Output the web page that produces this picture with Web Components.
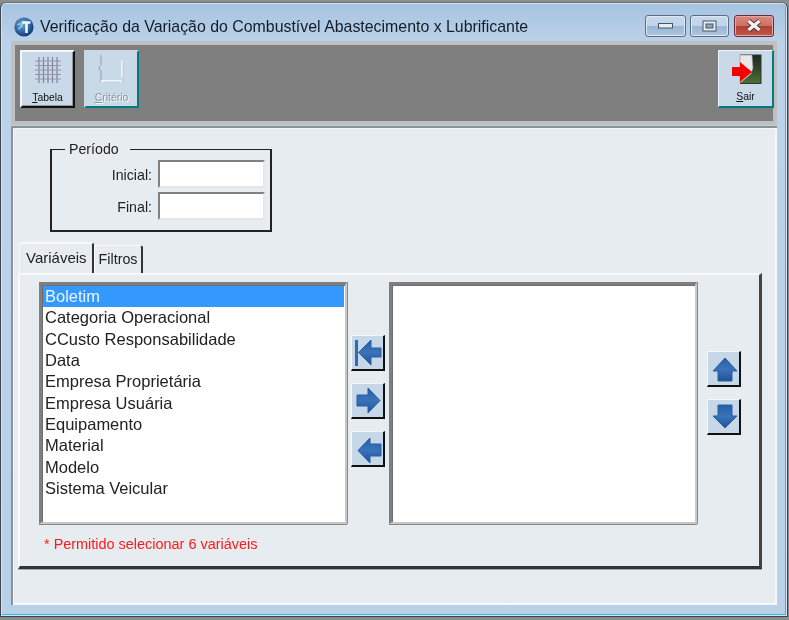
<!DOCTYPE html>
<html lang="pt"><head><meta charset="utf-8"><title>Verificação</title>
<style>
html,body{margin:0;padding:0;background:#8c8c8c;}
body{width:789px;height:620px;overflow:hidden;font-family:"Liberation Sans",Arial,sans-serif;color:#111;}
</style></head><body>
<app-window>
  <span slot="title">Verificação da Variação do Combustível Abastecimento x Lubrificante</span>
  <tool-button slot="tools" icon="grid" key="T" rest="abela" raised></tool-button>
  <tool-button slot="tools" icon="crit" key="C" rest="ritério" disabled></tool-button>
  <tool-button slot="tools-end" icon="exit" key="S" rest="air"></tool-button>

  <period-box></period-box>

  <tab-view>
    <tab-item slot="tabs" active>Variáveis</tab-item>
    <tab-item slot="tabs">Filtros</tab-item>
    <list-box>
      <list-row selected>Boletim</list-row>
      <list-row>Categoria Operacional</list-row>
      <list-row>CCusto Responsabilidade</list-row>
      <list-row>Data</list-row>
      <list-row>Empresa Proprietária</list-row>
      <list-row>Empresa Usuária</list-row>
      <list-row>Equipamento</list-row>
      <list-row>Material</list-row>
      <list-row>Modelo</list-row>
      <list-row>Sistema Veicular</list-row>
    </list-box>
    <arrow-stack class="mid">
      <arrow-button kind="first"></arrow-button>
      <arrow-button kind="right"></arrow-button>
      <arrow-button kind="left"></arrow-button>
    </arrow-stack>
    <list-box></list-box>
    <arrow-stack class="side">
      <arrow-button kind="up"></arrow-button>
      <arrow-button kind="down"></arrow-button>
    </arrow-stack>
    <span slot="note">* Permitido selecionar 6 variáveis</span>
  </tab-view>
</app-window>
<script>
function def(name, css, html){
  customElements.define(name, class extends HTMLElement{
    connectedCallback(){
      if(this.shadowRoot) return;
      const r=this.attachShadow({mode:'open'});
      r.innerHTML='<style>'+css+'</style>'+(typeof html==='function'?html(this):html);
    }
  });
}
def('app-window',`
:host{display:flex;flex-direction:column;box-sizing:border-box;width:788px;height:615px;margin-top:2px;
 border:1px solid #3d464f;border-top-color:#6a7077;border-radius:6px 6px 0 0;
 background:linear-gradient(#a5c3e0 0,#bcd2ea 40px,#b9d0e9 100%);
 box-shadow:inset 0 0 0 1px #d5e3f1, inset -2px -2px 0 #28c0e0;filter:blur(.35px)}
.title{display:flex;align-items:center;height:38px;box-sizing:border-box;padding:10px 0 0 13px;flex:none}
.logo{width:20px;height:20px;margin-right:6px;flex:none}
.t{flex:1;font:15.9px "Liberation Sans",Arial,sans-serif;color:#141c28;white-space:nowrap}
.wb{display:flex;gap:4px;padding-bottom:3px;margin-right:13px}
.wb i{display:flex;align-items:center;justify-content:center;width:40px;height:22px;box-sizing:border-box;border:1px solid #5b6d85;border-radius:3px;
 background:linear-gradient(#c6d8ec 0,#c0d4ea 48%,#9ab6d4 52%,#adc6e0 100%);box-shadow:inset 0 0 0 1px #dde8f3}
.wb i.x{border-color:#6d2a38;background:linear-gradient(#d98a80 0,#cf6f63 48%,#b03f33 52%,#c2574c 100%);box-shadow:inset 0 0 0 1px #e5a9a2}
.bar{flex:none;display:flex;justify-content:space-between;height:84px;margin:0 10px;box-sizing:border-box;border:4px solid #c0c0c0;background:#7f7f7f;padding:5px 0 0 5px}
.bar div{display:flex;gap:9px;align-items:flex-start}
.bar div.e{margin-right:-1px}
.main{flex:1;margin:1px 10px 0 10px;box-sizing:border-box;background:#e7ecf0;border:solid;border-width:2px 0 0 2px;border-color:#8d9297;box-shadow:inset 1px 1px 0 #f6f8f9, inset -2px -2px 0 #f6f8f9;padding:13px 14px 0 5px;min-height:0}
.foot{height:11px;flex:none}
`,`<div class="title">
<svg class="logo" viewBox="0 0 20 20"><defs><radialGradient id="g" cx=".4" cy=".35" r=".7"><stop offset="0" stop-color="#6fa6d8"/><stop offset=".6" stop-color="#2c63a3"/><stop offset="1" stop-color="#0f2f63"/></radialGradient></defs><circle cx="10" cy="10" r="9.6" fill="url(#g)"/><path d="M8 5.5h8.5M12.5 5.5V16" stroke="#f2f6fb" stroke-width="2.6" fill="none"/><path d="M3.5 8c2.5-2 4.5-1 4.5 .6s-3.5 2-3.5 3.8" stroke="#a8c8e6" stroke-width="1.4" fill="none"/></svg>
<div class="t"><slot name="title"></slot></div>
<div class="wb"><i style="width:41px"><svg width="15" height="7"><rect x=".5" y="1.5" width="14" height="4.5" fill="#e8edf3" stroke="#4b5563"/></svg></i><i style="width:39px;margin-right:1px"><svg width="15" height="12"><rect x="1" y="1" width="13" height="10" fill="#e8edf3" stroke="#4b5563"/><rect x="4" y="4" width="7" height="4" fill="#8aa5c4" stroke="#4b5563"/></svg></i><i class="x"><svg width="16" height="13" viewBox="0 0 16 13"><path d="M2.5 2 13.5 11M13.5 2 2.5 11" stroke="#4d3038" stroke-width="5"/><path d="M2.5 2 13.5 11M13.5 2 2.5 11" stroke="#f2f2f2" stroke-width="3.4"/></svg></i></div>
</div>
<div class="bar"><div><slot name="tools"></slot></div><div class="e"><slot name="tools-end"></slot></div></div>
<div class="main"><slot></slot></div>
<div class="foot"></div>`);

const ICONS={
grid:`<svg width="26" height="26" viewBox="0 0 26 26"><g stroke="#84819c" stroke-width="1.2" fill="none"><path d="M4 0v26M8.5 0v26M13 0v26M17.5 0v26M22 0v26"/><path d="M0 4h26M0 8.5h26M0 13h26M0 17.5h26M0 22h26" stroke="#9693ab"/></g></svg>`,
crit:`<svg width="28" height="29" viewBox="0 0 28 29"><path d="M3 0v10M2 11l-1 4M3 15v12" stroke="#9aa7b3" stroke-width="1.2" fill="none"/><path d="M3 26h20M24 6v17M23 25v3" stroke="#fff" stroke-width="1.4" fill="none"/><path d="M25 7v20H6" stroke="#aebdca" stroke-width=".6" fill="none"/></svg>`,
exit:`<svg width="32" height="30" viewBox="0 0 32 30"><defs><linearGradient id="d" x1="0" y1="0" x2="0" y2="1"><stop offset="0" stop-color="#1e2a1a"/><stop offset=".5" stop-color="#33482a"/><stop offset="1" stop-color="#4f7034"/></linearGradient></defs><rect x="10.5" y="1" width="20.5" height="28.5" fill="url(#d)" stroke="#333"/><path d="M10 1h12l1 13-2 6-11 9z" fill="#e8e8e8" stroke="#8a8a8a" stroke-width=".6"/><path d="M2 13h8V8l12 10-12 10v-6H2z" fill="#f40000"/></svg>`};
def('tool-button',`
:host{display:block;width:55px;height:58px;box-sizing:border-box;background:#c9d9e8;border:2px solid;border-color:#c9d9e8 #067a7a #067a7a #c9d9e8;font:10.4px "Liberation Sans",Arial,sans-serif;color:#111;text-align:center}
:host([raised]){border-color:#f4f7fa #111 #111 #f4f7fa;box-shadow:inset -1px -1px 0 #8d98a3}
:host([icon=exit]){width:56px;border-color:#eef3f7 #067a7a #067a7a #eef3f7;border-width:1px 2px 2px 1px}
.i{display:flex;justify-content:center;align-items:center;height:40px;box-sizing:border-box;padding-bottom:5px}
.l{line-height:12px}
u{text-underline-offset:1px}
:host([disabled]) .l{color:#8a97a3;text-shadow:1px 1px 0 #f4f7fa}
`,h=>`<div class="i">${ICONS[h.getAttribute('icon')]}</div><div class="l"><u>${h.getAttribute('key')}</u>${h.getAttribute('rest')}</div>`);

def('period-box',`
:host{display:block;width:222px;margin:0 0 10px 32px;font:14.2px "Liberation Sans",Arial,sans-serif;color:#222}
fieldset{margin:0;padding:2px 5px 9px 0;border:solid #222;border-width:1.5px 2px 2px 2px;height:77px;min-width:0}
legend{margin-left:13px;padding:0 11px 0 4px;line-height:16px;height:16px}
.r{display:flex;align-items:center;justify-content:flex-end;gap:6px;height:28px;margin-bottom:4px}
.r:first-of-type{margin-top:1px}
label{padding-top:2px}
input{all:unset;display:block;box-sizing:border-box;width:107px;height:28px;background:#fff;border:2px solid;border-color:#808080 #e6e6e6 #e6e6e6 #808080}
`,`<fieldset><legend>Período</legend>
<div class="r"><label>Inicial:</label><input aria-label="Inicial"></div>
<div class="r"><label>Final:</label><input aria-label="Final"></div></fieldset>`);

def('tab-view',`
:host{display:block;font:14.3px "Liberation Sans",Arial,sans-serif;color:#222}
.tabs{display:flex;height:31px;align-items:flex-end;padding-left:1px}
.panel{box-sizing:border-box;width:744px;height:296px;border:solid;border-width:2px 3px 3px 2px;border-color:#f7f9fa #444 #333 #f7f9fa;padding:7px 0 0 19px;display:flex;flex-direction:column;box-shadow:0 1px 0 #aaa}
.row{display:flex;align-items:flex-start;height:243px}
.note{font-size:14.45px;color:#ff1a1a;margin:11px 0 0 5px;line-height:17px}
`,`<div class="tabs"><slot name="tabs"></slot></div>
<div class="panel"><div class="row"><slot></slot></div><div class="note"><slot name="note"></slot></div></div>`);

def('tab-item',`
:host{display:block;box-sizing:border-box;height:28px;padding:5px 3px 0 4px;background:#e7ecf0;border:solid;border-width:1px 2px 0 1px;border-color:#f7f9fa #333 #333 #f7f9fa;line-height:17px;border-radius:3px 3px 0 0;white-space:nowrap}
:host([active]){font-size:15px;height:31px;padding:5px 5px 0 6px;border-width:2px 2px 0 1px}
`,`<slot></slot>`);

def('list-box',`
:host{display:block;box-sizing:border-box;width:308px;height:242px;flex:none;background:#fff;border:solid;border-width:3px 2px 2px 3px;border-color:#7f7f7f #c8c8c8 #c8c8c8 #7f7f7f;box-shadow:inset 1px 1px 0 #6e6e6e,0 1px 0 #888,1px 0 0 #888;padding:1px}
`,`<slot></slot>`);

def('list-row',`
:host{display:block;height:21.33px;padding-left:2px;font:16.5px/21.33px "Liberation Sans",Arial,sans-serif;color:#222;white-space:nowrap}
:host([selected]){background:#3399ff;color:#eaf4ff}
`,`<slot></slot>`);

def('arrow-stack',`
:host{display:flex;flex-direction:column;flex:none;width:34px;gap:12px;margin:53px 4px 0 4px}
:host(.side){margin:69px 0 0 10px}
`,`<slot></slot>`);

const ARW={
first:'<path d="M4 5h3v26H4z" fill="#2f6bb2"/><path d="M7.5 17.5 20 5v8h10v9H20v8z" fill="url(#a)" stroke="#2a5fa5"/>',
right:'<path d="M6 12h11V5l12 12.5L17 30v-7H6z" fill="url(#a)" stroke="#2a5fa5"/>',
left:'<path d="M30 13H19V7L7 19.5 19 32v-7h11z" fill="url(#a)" stroke="#2a5fa5"/>',
up:'<path d="M11 30V20H6L18 7l12 13h-5v10z" fill="url(#a)" stroke="#2a5fa5"/>',
down:'<path d="M11 6v11H6l12 12 12-12h-5V6z" fill="url(#a)" stroke="#2a5fa5"/>'};
def('arrow-button',`
:host{display:block;box-sizing:border-box;width:34px;height:36px;background:#c6d7e7;border:solid;border-width:1px 2px 2px 1px;border-color:#f4f7fa #111 #111 #f4f7fa}
svg{display:block;margin:-1px 0 0 -1px}
`,h=>`<svg width="34" height="36" viewBox="0 0 34 36"><defs><linearGradient id="a" x1="0" y1="0" x2="0" y2="1"><stop offset="0" stop-color="#2560a8"/><stop offset=".5" stop-color="#3a73b8"/><stop offset="1" stop-color="#1f5296"/></linearGradient></defs>${ARW[h.getAttribute('kind')]}</svg>`);
</script>
</body></html>
